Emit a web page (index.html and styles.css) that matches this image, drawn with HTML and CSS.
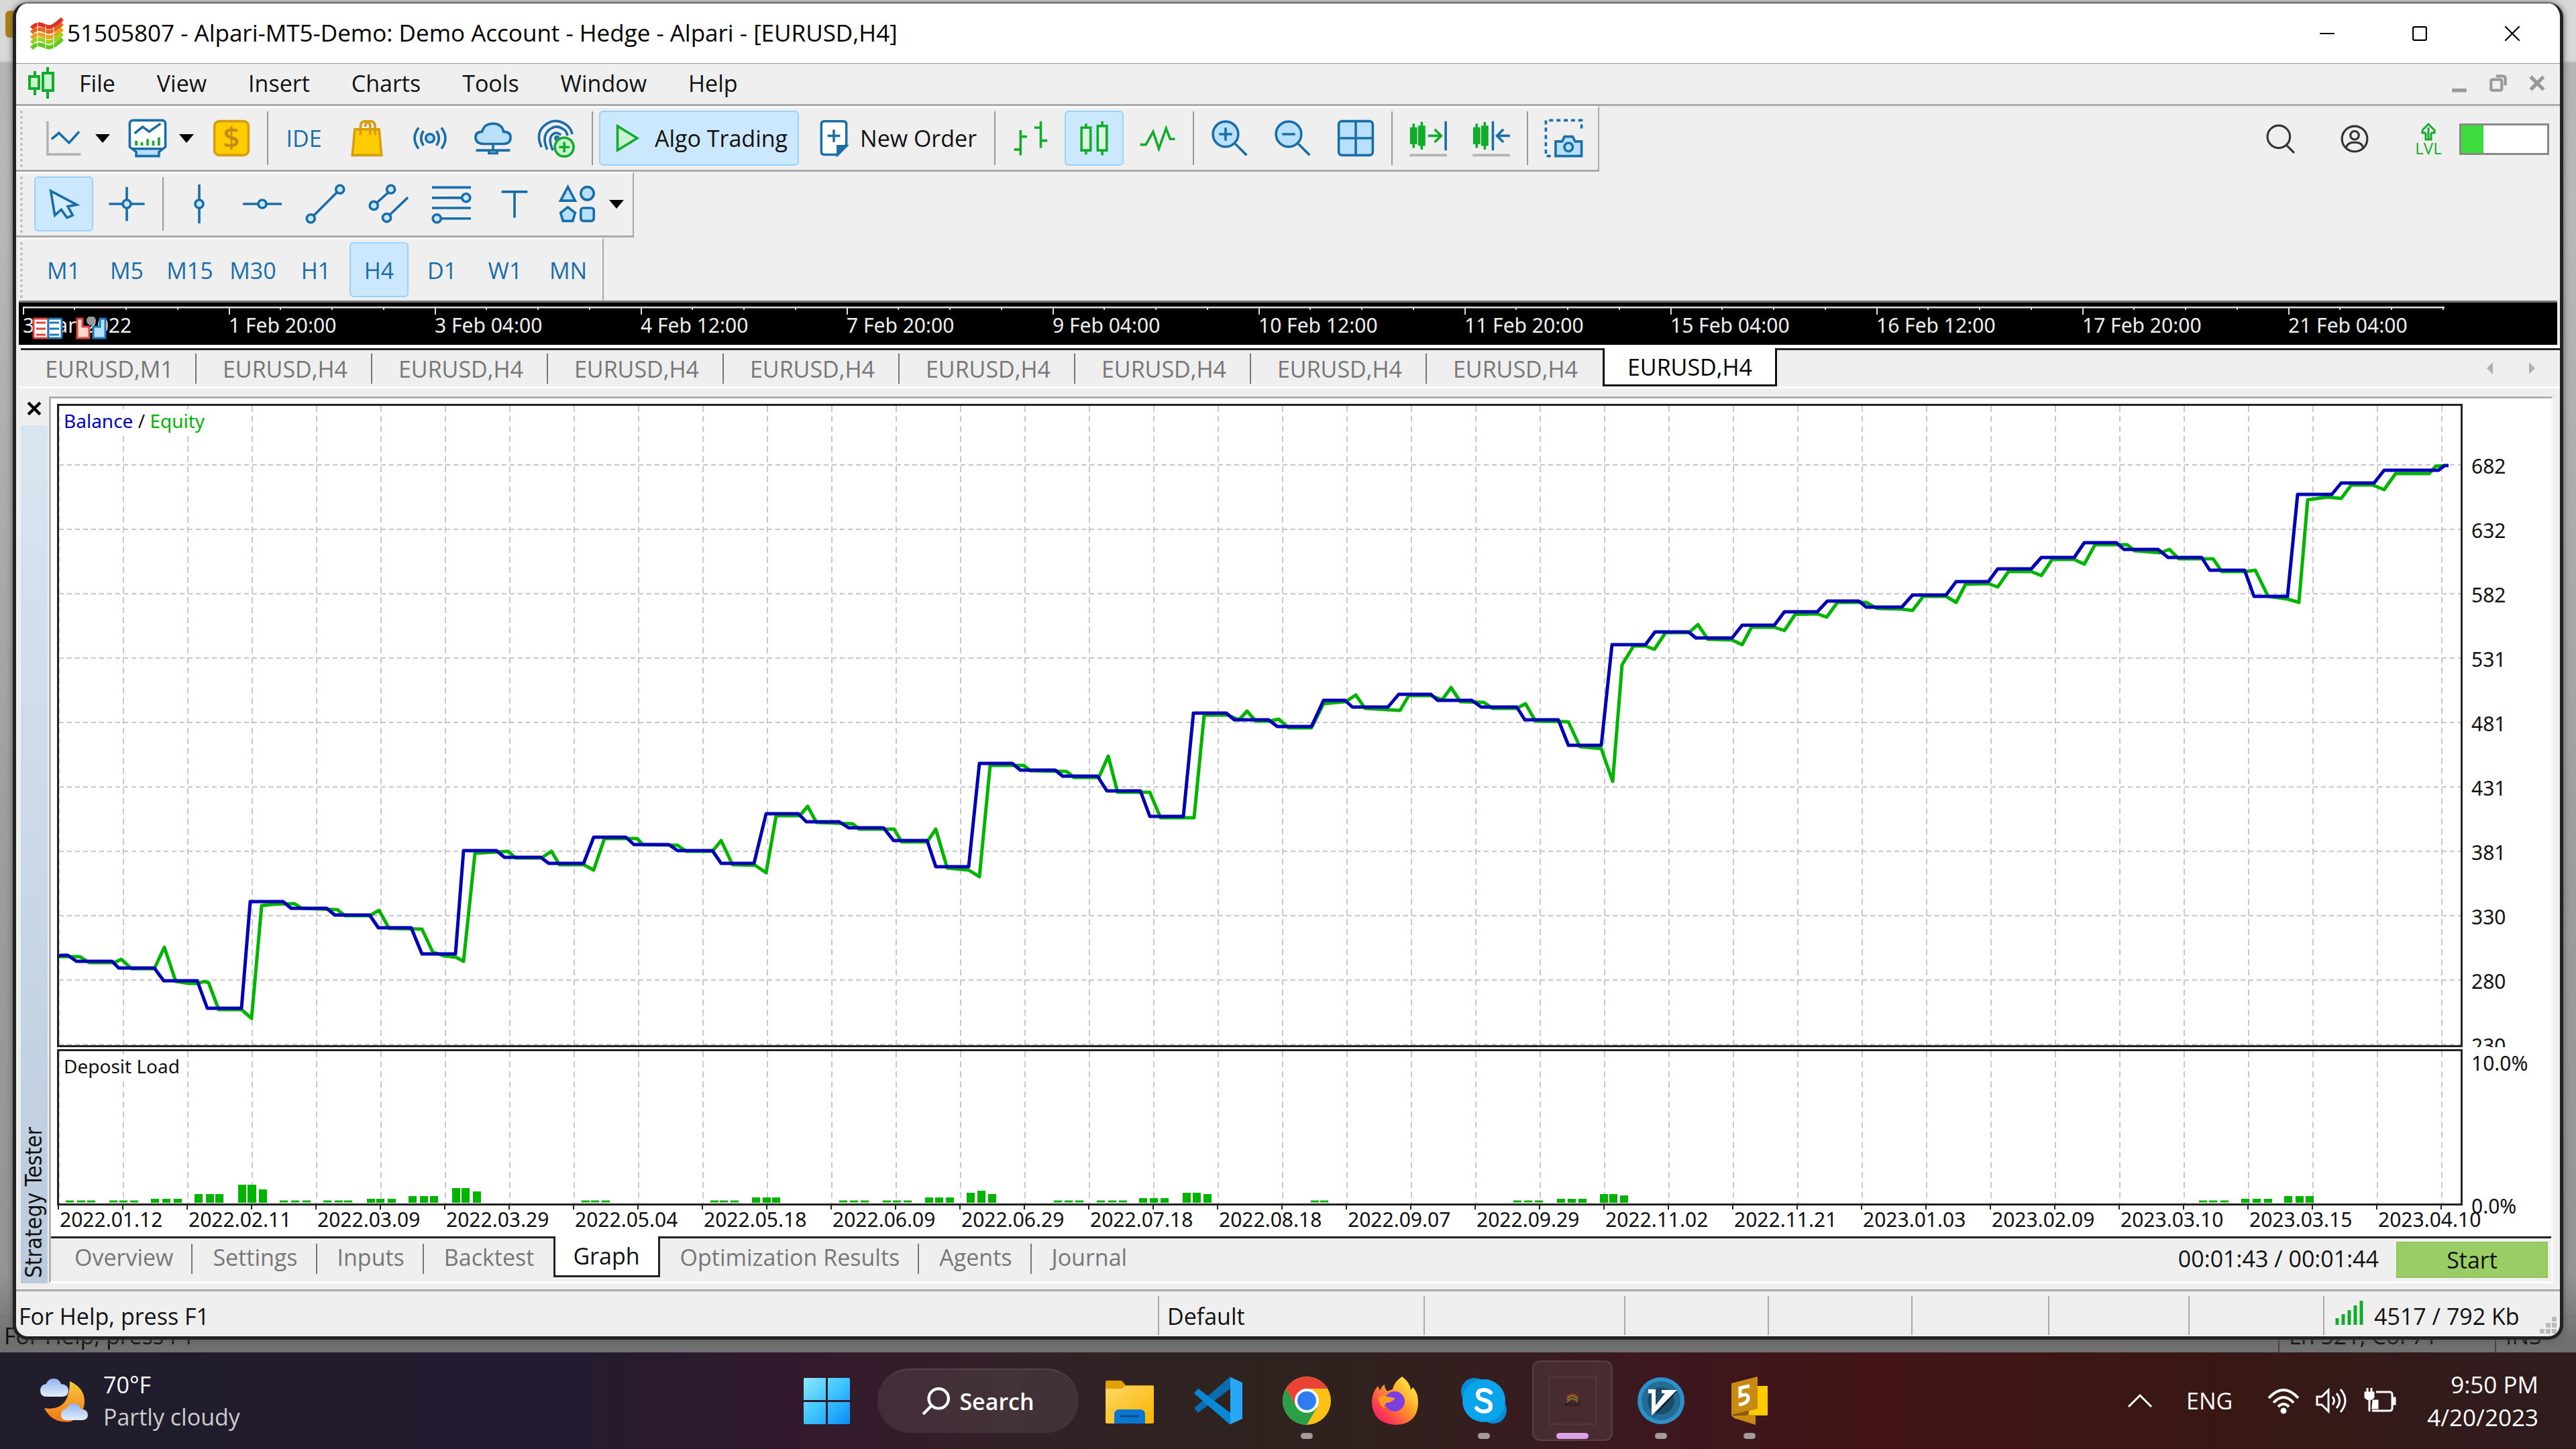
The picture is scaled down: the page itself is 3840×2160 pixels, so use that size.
FILE: index.html
```html
<!DOCTYPE html>
<html lang="en">
<head>
<meta charset="utf-8">
<title>51505807 - Alpari-MT5-Demo: Demo Account - Hedge - Alpari - [EURUSD,H4]</title>
<link rel="stylesheet" href="styles.css">
</head>
<body>
<div class="screen">
<div class="desktop">
  <div class="back-window" aria-hidden="true">
    <span class="back-logo"></span>
    <div class="back-status"><span class="back-help">For Help, press F1</span><span class="back-pos">Ln 521, Col 71</span><span class="back-ins">INS</span></div>
  </div>

  <main class="window">
    <header class="titlebar">
      <svg class="app-logo" viewBox="0 0 48 48" fill="none" stroke-width="6">
        <path d="M1 16c7-7 12-7 20-3s14 0 26-11" stroke="#e03020"/>
        <path d="M1 23c7-7 12-7 20-3s14 0 26-11" stroke="#e8641c"/>
        <path d="M1 31c7-7 12-7 20-3s14 0 26-11" stroke="#e8a020"/>
        <path d="M1 38c7-7 12-7 20-3s14 0 26-11" stroke="#9bd21c"/>
        <path d="M1 46c7-7 12-7 20-3s14 0 26-11" stroke="#5fc81c"/>
        <path d="M10 8v38M22 12v36M34 14v32" stroke="#fff" stroke-width="1"/>
      </svg>
      <h1 class="title">51505807 - Alpari-MT5-Demo: Demo Account - Hedge - Alpari - [EURUSD,H4]</h1>
      <div class="win-controls">
        <button aria-label="Minimize"><svg viewBox="0 0 20 20"><path d="M0 10h20" stroke="#000" stroke-width="2"/></svg></button>
        <button aria-label="Maximize"><svg viewBox="0 0 20 20"><rect x="1" y="1" width="18" height="18" rx="2" fill="none" stroke="#000" stroke-width="2"/></svg></button>
        <button aria-label="Close"><svg viewBox="0 0 20 20"><path d="M0 0l20 20M20 0L0 20" stroke="#000" stroke-width="2"/></svg></button>
      </div>
    </header>

    <nav class="menubar">
      <svg class="menu-logo" viewBox="0 0 42 48" stroke="#12ab2c" stroke-width="4" fill="#c8f5cf"><path d="M11 6v36M30 0v47"/><rect x="3" y="14" width="14" height="18"/><rect x="23" y="9" width="15" height="26"/></svg>
      <button>File</button><button>View</button><button>Insert</button><button>Charts</button><button>Tools</button><button>Window</button><button>Help</button>
      <div class="mdi-controls">
        <button aria-label="Minimize chart"><svg viewBox="0 0 24 28"><path d="M2 24h20" stroke="#999" stroke-width="5"/></svg></button>
        <button aria-label="Restore chart"><svg viewBox="0 0 24 28" fill="none" stroke="#999" stroke-width="4"><rect x="2" y="9" width="15" height="15" rx="2"/><path d="M9 4h9q4 0 4 4v9"/></svg></button>
        <button aria-label="Close chart"><svg viewBox="0 0 24 28"><path d="M3 5l18 18M21 5L3 23" stroke="#999" stroke-width="5"/></svg></button>
      </div>
    </nav>

    <div class="toolrow">
      <div class="toolbar">
        <button class="tool" aria-label="Chart"><svg viewBox="0 0 24 24"><path class="gray" d="M2 1.500v20.500h20.500"/><path d="M4.500 12.600L9 8.800l6.300 6.100L21.500 8"/></svg></button>
        <button class="caret" aria-label="Chart list"></button>
        <button class="tool" aria-label="Profiles"><svg viewBox="0 0 24 24"><path fill="#b9e0fa" d="M2 18h20l-3 2.500v2.500H5v-2.500z"/><rect x="1" y="1" width="22" height="17.500" rx="2" fill="#fff"/><path d="M4 9l5-4 4 3 7-5" /><path class="green" d="M5 16.500v-3M8.500 16.500v-2M12 16.500v-4M15.500 16.500v-3M19 16.500v-5"/></svg></button>
        <button class="caret" aria-label="Profile list"></button>
        <button class="tool" aria-label="Finance"><svg viewBox="0 0 24 24" class="gold"><rect x="1.500" y="1.500" width="21" height="21" rx="3" fill="#fc0"/><text x="12" y="18" text-anchor="middle" class="dollar">$</text></svg></button>
        <i class="sep"></i>
        <button class="tool ide">IDE</button>
        <button class="tool" aria-label="Market"><svg viewBox="0 0 24 24" class="gold"><path fill="#fc0" d="M4.500 6.500h15l1.500 16H3z"/><path d="M8 10V5q0-3.500 3-3.500T14 5v5M11 5q0-3.500 3-3.500T17 5v5" fill="none"/></svg></button>
        <button class="tool" aria-label="Signals"><svg viewBox="0 0 24 24"><circle cx="12" cy="12" r="2.600" fill="#b9e0fa"/><path d="M8 7.500q-3 4.500 0 9M16 7.500q3 4.500 0 9M5 5.500q-5 6.500 0 13M19 5.500q5 6.500 0 13"/></svg></button>
        <button class="tool" aria-label="Cloud"><svg viewBox="0 0 24 24"><path fill="#b9e0fa" d="M5.500 15.500q-4.300-.5-4.300-4 0-3.500 4-3.500Q6.500 3 12 3t6.500 5q4.300 0 4.300 3.500 0 4-4.300 4z"/><path d="M12 15.500v4M1.500 19.500h21M9.500 19.500h5v1.800h-5z"/></svg></button>
        <button class="tool" aria-label="Virtual hosting"><svg viewBox="0 0 24 24"><path d="M3 17.500Q-1 9 5 4t13-.5q3 2 4 6M6.500 19Q3 11 7.500 7t9-.5q2 1 2.500 4M10 19.500q-3-7-.5-9.500t5.500 0"/><circle cx="12.500" cy="12" r="1"/><circle cx="17" cy="17.500" r="5.800" fill="#c8f5cf" class="green"/><path class="green" d="M17 14.300v6.400M13.800 17.500h6.400"/></svg></button>
        <i class="sep"></i>
        <button class="tool wide on"><svg class="play" viewBox="0 0 14 24"><path d="M1 4.500v15L13.200 12z"/></svg>Algo Trading</button>
        <button class="tool wide"><svg class="order" viewBox="0 0 18 24"><path fill="#fff" d="M3 1.200h12q2 0 2 2V16l-5.500 6.500H3q-2 0-2-2v-17.300q0-2 2-2z"/><path fill="#1a6ea8" d="M11.500 22.500V17H17z"/><path d="M9 6.500v8M5 10.500h8"/></svg>New Order</button>
        <i class="sep"></i>
        <button class="tool" aria-label="Bar chart"><svg viewBox="0 0 24 24" class="green"><path d="M5.500 7v15.500M5.500 11h4M1.500 19h4M18 1.500V18M14 5.500h4M18 13.500h4"/></svg></button>
        <button class="tool on" aria-label="Candlesticks"><svg viewBox="0 0 24 24" class="green"><path d="M7 3v19M17 1.500v21"/><path fill="#d9f7df" d="M4.200 5.500h5.600v14H4.200zM14.200 4.500h5.600v15h-5.600z"/></svg></button>
        <button class="tool" aria-label="Line chart"><svg viewBox="0 0 24 24" class="green"><path d="M1.500 16h3.500L9.500 8l3.500 10.500L17.500 6l2.500 6.500h3"/></svg></button>
        <i class="sep"></i>
        <button class="tool" aria-label="Zoom in"><svg viewBox="0 0 24 24"><circle cx="9.500" cy="9.500" r="7.800" fill="#b9e0fa"/><path d="M15.500 15.500L22.500 22.500M9.500 5.500v8M5.500 9.500h8"/></svg></button>
        <button class="tool" aria-label="Zoom out"><svg viewBox="0 0 24 24"><circle cx="9.500" cy="9.500" r="7.800" fill="#b9e0fa"/><path d="M15.500 15.500L22.500 22.500M5.500 9.500h8"/></svg></button>
        <button class="tool" aria-label="Tile windows"><svg viewBox="0 0 24 24"><rect x="1.500" y="1.500" width="21" height="21" rx="2" fill="#b9e0fa"/><path d="M12 1.500v21M1.500 12h21"/></svg></button>
        <i class="sep"></i>
        <button class="tool" aria-label="Shift end"><svg viewBox="0 0 24 24"><path class="gray" d="M.5 22.500h23"/><path class="green" d="M3 3v15M8 2v17M1.500 6h3v9h-3zM6.500 5h3v11h-3zM12 10.500h7M16 6.500l4 4-4 4"/><path d="M22.800 1.500v18"/></svg></button>
        <button class="tool" aria-label="Shift chart"><svg viewBox="0 0 24 24"><path class="gray" d="M.5 22.500h23"/><path class="green" d="M3 3v15M8 2v17M1.500 6h3v9h-3zM6.500 5h3v11h-3z"/><path d="M13 1.500v18M23.500 10.500H16M19.500 6.500l-4 4 4 4"/></svg></button>
        <i class="sep"></i>
        <button class="tool" aria-label="Screenshot"><svg viewBox="0 0 24 24"><path stroke-dasharray="2.500 2" d="M4 23H1V1h22v7"/><path fill="#b9e0fa" d="M7 14h4l1.500-3h5l1.500 3h4v9H7z"/><circle cx="15" cy="17.500" r="2.600"/></svg></button>
      </div>
      <div class="quick">
        <button aria-label="Search"><svg viewBox="0 0 42 42" fill="none" stroke="#333" stroke-width="3"><circle cx="18" cy="18" r="16"/><path d="M29 30l11 11"/></svg></button>
        <button aria-label="Account"><svg viewBox="0 0 42 42" fill="none" stroke="#333" stroke-width="3"><circle cx="21" cy="21" r="18"/><circle cx="21" cy="16" r="6"/><path d="M9 34q1-8 12-8t12 8"/></svg></button>
        <button aria-label="Level" class="lvl"><svg viewBox="0 0 42 28" fill="none" stroke="#12ab2c" stroke-width="3"><path d="M21 26V8M12 12l9-9 9 9v4h-5M12 12v4h5M17 16v10h8V16"/></svg>LVL</button>
        <div class="level" role="meter" aria-valuemin="0" aria-valuemax="100" aria-valuenow="26" aria-label="Level"><i style="width:26%"></i></div>
      </div>
    </div>

    <div class="toolrow">
      <div class="toolbar">
        <button class="tool on" aria-label="Cursor"><svg viewBox="0 0 24 24"><path fill="#d4ecfc" d="M4 4l2.500 15 4-3.500 3.500 5 3.500-1.500-3-5.500 5.500-1z"/></svg></button>
        <button class="tool" aria-label="Crosshair"><svg viewBox="0 0 24 24"><path d="M12 1.500v21M1 12h22"/><circle cx="12" cy="12" r="2.500" fill="#c5e6fc"/></svg></button>
        <i class="sep"></i>
        <button class="tool" aria-label="Vertical line"><svg viewBox="0 0 24 24"><path d="M12 0v24"/><circle cx="12" cy="12" r="2.500" fill="#c5e6fc"/></svg></button>
        <button class="tool" aria-label="Horizontal line"><svg viewBox="0 0 24 24"><path d="M0 12h24"/><circle cx="12" cy="12" r="2.500" fill="#c5e6fc"/></svg></button>
        <button class="tool" aria-label="Trend line"><svg viewBox="0 0 24 24"><path d="M3 21L21 3"/><circle cx="3" cy="21" r="2.500" fill="#c5e6fc"/><circle cx="21" cy="3" r="2.500" fill="#c5e6fc"/></svg></button>
        <button class="tool" aria-label="Channel"><svg viewBox="0 0 24 24"><path d="M3 13L14 3M11 20.500L24 8"/><circle cx="3" cy="13" r="2.500" fill="#c5e6fc"/><circle cx="13.500" cy="3" r="2.500" fill="#c5e6fc"/><circle cx="11" cy="20.500" r="2.500" fill="#c5e6fc"/></svg></button>
        <button class="tool" aria-label="Fibonacci"><svg viewBox="0 0 24 24"><path d="M0 1.800h24M0 8.200h24M0 14.500h24M0 21h24"/><circle cx="21" cy="8.200" r="2.500" fill="#c5e6fc"/><circle cx="3" cy="21" r="2.500" fill="#c5e6fc"/></svg></button>
        <button class="tool" aria-label="Text"><svg viewBox="0 0 24 24"><path d="M4 4.500h16M12 4.500V20.500"/></svg></button>
        <button class="tool" aria-label="Shapes"><svg viewBox="0 0 24 24" ><g fill="#b9e0fa"><path d="M6 1.500L10.500 10h-9z"/><circle cx="18" cy="5.500" r="4"/><path d="M6 14l4.500 3.500L9 22.500H3L1.500 17.500z"/><rect x="14" y="14.500" width="8" height="8" rx="1.500"/></g></svg></button>
        <button class="caret" aria-label="Shape list"></button>
      </div>
    </div>

    <div class="toolrow last">
      <div class="toolbar periods">
        <button class="tool">M1</button><button class="tool">M5</button><button class="tool">M15</button><button class="tool">M30</button><button class="tool">H1</button><button class="tool on">H4</button><button class="tool">D1</button><button class="tool">W1</button><button class="tool">MN</button>
      </div>
    </div>

    <section class="ruler">
      <svg class="ruler-ticks" height="12"><defs><pattern id="rt" width="307" height="12" patternUnits="userSpaceOnUse"><path d="M1 0v12M77 0v5M154 0v5M231 0v5" stroke="#ddd" stroke-width="2"/></pattern></defs><rect width="3610" height="12" fill="url(#rt)"/><path d="M0 1h3610" stroke="#ddd" stroke-width="3"/></svg>
      <div class="ruler-labels"><span>31 Jan 2022</span><span>1 Feb 20:00</span><span>3 Feb 04:00</span><span>4 Feb 12:00</span><span>7 Feb 20:00</span><span>9 Feb 04:00</span><span>10 Feb 12:00</span><span>11 Feb 20:00</span><span>15 Feb 04:00</span><span>16 Feb 12:00</span><span>17 Feb 20:00</span><span>21 Feb 04:00</span></div>
      <svg class="ruler-icons" viewBox="0 0 110 36"><rect x="1" y="3" width="22" height="29" rx="2" fill="#fff" stroke="#e0453c" stroke-width="3"/><rect x="23" y="3" width="20" height="29" rx="2" fill="#fff" stroke="#1f78b8" stroke-width="3"/><path d="M5 9h14M5 18h14M5 27h14" stroke="#e0453c" stroke-width="3"/><path d="M25 9h14M25 18h14M25 27h14" stroke="#1f78b8" stroke-width="3"/><path d="M66 3h8v12h10v17H66z" fill="#ffd6d2" stroke="#e0453c" stroke-width="3"/><path d="M108 3h-8v12h-10v17h18z" fill="#b4defa" stroke="#1f78b8" stroke-width="3"/><circle cx="87" cy="6" r="7" fill="#999"/></svg>
    </section>

    <nav class="chart-tabs">
      <button>EURUSD,M1</button><button>EURUSD,H4</button><button>EURUSD,H4</button><button>EURUSD,H4</button><button>EURUSD,H4</button><button>EURUSD,H4</button><button>EURUSD,H4</button><button>EURUSD,H4</button><button>EURUSD,H4</button><button class="active">EURUSD,H4</button>
      <div class="tab-scroll"><button aria-label="Scroll left"><svg viewBox="0 0 10 18"><path d="M9 0v18L0 9z" fill="#b0b0b0"/></svg></button><button aria-label="Scroll right"><svg viewBox="0 0 10 18"><path d="M1 0v18l9-9z" fill="#b0b0b0"/></svg></button></div>
    </nav>

    <section class="tester">
      <aside class="tester-side">
        <button class="tester-close" aria-label="Close tester"><svg viewBox="0 0 20 20"><path d="M2 2l16 16M18 2L2 18" stroke="#000" stroke-width="4"/></svg></button>
        <div class="tester-name"><span>Strategy Tester</span></div>
      </aside>
      <div class="tester-body">
        <div class="graph">
          <div class="plot">
            <svg class="fill">
              <defs><pattern id="gv" x="95" width="96" height="15" patternUnits="userSpaceOnUse"><path d="M1 0v9" stroke="#c8c8c8" stroke-width="2"/></pattern><pattern id="gh" y="87" width="12" height="96" patternUnits="userSpaceOnUse"><path d="M0 1h7" stroke="#c8c8c8" stroke-width="2"/></pattern></defs>
              <rect width="100%" height="100%" fill="url(#gv)"/><rect width="100%" height="100%" fill="url(#gh)"/>
              <g fill="none" stroke-width="5" stroke-linejoin="round" transform="translate(-2 -1)">
              <polyline stroke="#00b400" points="0,822 33,822 47,831 84,831 95,826 110,840 144,840 159,808 176,859 196,862 210,862 218,859 225,861 240,901 274,901 289,914 304,746 322,744 353,743 364,750 417,752 428,761 465,761 479,753 494,780 543,781 559,815 576,821 594,823 605,829 622,668 671,665 683,675 721,675 736,665 748,685 784,685 799,693 815,646 864,646 872,655 924,656 937,665 976,665 989,649 1006,685 1040,686 1056,697 1071,612 1106,612 1118,598 1131,622 1185,624 1195,632 1247,632 1258,651 1296,651 1309,632 1326,690 1358,693 1374,703 1390,537 1440,537 1450,545 1504,546 1515,555 1552,555 1566,523 1580,577 1628,577 1644,615 1694,615 1709,462 1744,462 1761,469 1773,456 1786,471 1806,471 1820,468 1835,481 1869,481 1887,445 1920,442 1935,432 1949,452 1983,454 2001,455 2014,433 2047,433 2064,439 2077,421 2091,442 2126,443 2139,452 2175,452 2188,445 2203,471 2252,472 2269,509 2301,512 2318,561 2332,387 2349,359 2367,359 2380,364 2397,339 2432,339 2445,327 2460,349 2496,350 2511,357 2525,331 2559,331 2574,336 2590,312 2623,311 2637,316 2653,294 2696,294 2712,303 2749,304 2765,306 2781,285 2815,285 2830,294 2844,267 2878,266 2892,271 2908,248 2942,248 2957,254 2973,230 3006,230 3021,237 3037,208 3085,208 3096,217 3134,220 3148,215 3162,229 3213,229 3226,248 3262,248 3276,246 3295,285 3324,289 3341,294 3354,141 3384,137 3404,139 3419,119 3451,119 3468,126 3485,102 3535,102 3545,91 3558,90"/>
              <polyline stroke="#0000b4" points="0,822 5,820 15,820 28,829 81,829 91,839 144,839 158,858 208,858 223,899 274,899 287,740 336,740 348,750 401,750 413,760 465,760 478,779 527,779 543,818 593,818 605,664 654,664 666,674 720,674 732,683 784,683 799,644 847,644 859,655 911,655 924,664 976,664 989,683 1038,683 1056,609 1104,609 1116,621 1165,621 1179,630 1231,630 1246,649 1296,649 1309,688 1358,688 1374,534 1423,534 1435,544 1487,544 1498,553 1550,553 1564,575 1614,575 1628,613 1678,613 1693,459 1742,459 1754,469 1805,469 1818,479 1869,479 1887,440 1919,440 1930,450 1983,450 1999,431 2047,431 2057,440 2108,440 2122,450 2175,450 2187,469 2237,469 2252,507 2301,507 2317,357 2367,357 2381,338 2431,338 2442,347 2496,347 2511,328 2559,328 2574,308 2623,308 2638,292 2685,292 2696,301 2749,301 2765,283 2815,283 2830,263 2878,263 2892,244 2942,244 2957,227 3006,227 3021,205 3069,205 3080,215 3131,215 3146,227 3196,227 3208,246 3260,246 3274,285 3324,285 3339,133 3390,133 3404,116 3453,116 3468,97 3549,97 3558,90 3564,90"/>
              </g>
            </svg>
            <p class="legend"><span class="bal">Balance</span> / <span class="eq">Equity</span></p>
          </div>
          <div class="y-axis"><span>682</span><span>632</span><span>582</span><span>531</span><span>481</span><span>431</span><span>381</span><span>330</span><span>280</span><span>230</span></div>
          <div class="load">
            <svg class="fill">
              <rect width="100%" height="100%" fill="url(#gv)"/>
              <g transform="translate(-2 -1)">
              <path fill="none" stroke="#00b400" stroke-width="3" d="M12 225h12M29 225h12M44 225h12M77 225h12M92 225h12M108 225h12M331 225h12M348 225h12M365 225h12M396 225h12M413 225h12M427 225h12M781 225h12M795 225h12M811 225h12M973 225h12M987 225h12M1003 225h12M1165 225h12M1181 225h12M1197 225h12M1230 225h12M1245 225h12M1261 225h12M1485 225h12M1501 225h12M1517 225h12M1549 225h12M1566 225h12M1582 225h12M1868 225h12M1882 225h12M2170 225h12M2186 225h12M2202 225h12M3192 225h12M3207 225h12M3224 225h12"/>
              <path fill="#00b400" d="M139 221h12v6h-12zM156 221h12v6h-12zM173 221h12v6h-12zM204 214h12v13h-12zM221 214h12v13h-12zM235 214h12v13h-12zM269 200h12v27h-12zM283 200h13v27h-13zM300 207h12v20h-12zM461 221h12v6h-12zM475 221h12v6h-12zM492 221h12v6h-12zM523 217h12v10h-12zM540 217h12v10h-12zM555 217h12v10h-12zM588 205h12v22h-12zM602 205h12v22h-12zM619 210h12v17h-12zM1035 219h12v8h-12zM1051 219h12v8h-12zM1065 219h12v8h-12zM1293 219h12v8h-12zM1308 219h12v8h-12zM1324 219h12v8h-12zM1355 212h12v15h-12zM1371 209h12v18h-12zM1387 214h12v13h-12zM1612 220h12v7h-12zM1628 220h12v7h-12zM1644 220h12v7h-12zM1677 212h12v15h-12zM1692 212h12v15h-12zM1708 214h12v13h-12zM2235 221h12v6h-12zM2251 221h12v6h-12zM2267 221h12v6h-12zM2299 214h12v13h-12zM2313 214h12v13h-12zM2329 216h12v11h-12zM3255 221h12v6h-12zM3272 221h12v6h-12zM3289 221h12v6h-12zM3319 217h12v10h-12zM3336 217h12v10h-12zM3351 217h12v10h-12z"/>
              </g>
            </svg>
            <p class="legend">Deposit Load</p>
          </div>
          <div class="load-axis"><span>10.0%</span><span>0.0%</span></div>
          <div class="dates"><span>2022.01.12</span><span>2022.02.11</span><span>2022.03.09</span><span>2022.03.29</span><span>2022.05.04</span><span>2022.05.18</span><span>2022.06.09</span><span>2022.06.29</span><span>2022.07.18</span><span>2022.08.18</span><span>2022.09.07</span><span>2022.09.29</span><span>2022.11.02</span><span>2022.11.21</span><span>2023.01.03</span><span>2023.02.09</span><span>2023.03.10</span><span>2023.03.15</span><span>2023.04.10</span></div>
        </div>
        <nav class="tester-tabs">
          <button>Overview</button><button>Settings</button><button>Inputs</button><button class="before">Backtest</button><button class="active">Graph</button><button>Optimization Results</button><button>Agents</button><button class="before">Journal</button>
          <span class="timer">00:01:43 / 00:01:44</span>
          <button class="start">Start</button>
        </nav>
      </div>
    </section>

    <footer class="status">
      <span class="help">For Help, press F1</span><span class="c396">Default</span><span class="c299"></span><span class="c214"></span><span class="c214"></span><span class="c204"></span><span class="c209"></span><span class="c201"></span>
      <span class="net"><svg viewBox="0 0 42 36"><path d="M3 36V26M12 36V20M21 36V14M30 36V7M39 36V0" stroke="#12ab2c" stroke-width="5"/></svg>4517 / 792 Kb</span>
      <svg class="grip" viewBox="0 0 26 26" fill="#bbb"><path d="M18 0h7v7h-7zM9 9h7v7H9zM18 9h7v7h-7zM0 18h7v7H0zM9 18h7v7H9zM18 18h7v7h-7z"/></svg>
    </footer>
  </main>
</div>

<footer class="taskbar">
  <button class="weather">
    <svg viewBox="0 0 72 66"><defs><linearGradient id="mo" x2="0" y2="1"><stop stop-color="#f8c83c"/><stop offset="1" stop-color="#f07818"/></linearGradient><linearGradient id="cl" x2="0" y2="1"><stop stop-color="#8fb4f0"/><stop offset="1" stop-color="#e4eefc"/></linearGradient></defs><path d="M44 4q22 10 22 30T46 64Q18 68 6 44q38 6 38-40z" fill="url(#mo)"/><path d="M10 27q-10 0-10-9t9-10q3-8 11-8t11 8q11 1 11 10t-10 9z" fill="url(#cl)"/><path d="M40 62q-9 0-9-8t8-9q3-8 11-8t10 8q11 1 11 9t-9 8z" fill="url(#cl)"/></svg>
    <span><b>70°F</b><em>Partly cloudy</em></span>
  </button>
  <div class="apps">
    <button class="app" aria-label="Start"><svg viewBox="0 0 72 72"><defs><linearGradient id="wi" x2="1" y2="1"><stop stop-color="#8ee6ff"/><stop offset=".5" stop-color="#3cc4ff"/><stop offset="1" stop-color="#0a8cf8"/></linearGradient></defs><path fill="url(#wi)" d="M4 2h31v33H2V4q0-2 2-2zM38 2h31q2 0 2 2v31H38zM2 38h33v33H4q-2 0-2-2zM38 38h33v31q0 2-2 2H38z"/></svg></button>
    <button class="search"><svg viewBox="0 0 40 40" fill="none" stroke="#fff" stroke-width="4"><circle cx="24" cy="16" r="14"/><path d="M14 26L2 38"/></svg>Search</button>
    <button class="app" aria-label="File Explorer"><svg viewBox="0 0 72 72"><defs><linearGradient id="fo" x2="1" y2="1"><stop stop-color="#ffd766"/><stop offset="1" stop-color="#f8b400"/></linearGradient></defs><path fill="#e0a000" d="M0 8q0-2 2-2h22l6 7h40q2 0 2 2v20H0z"/><path fill="url(#fo)" d="M0 18h24l5-4h41q2 0 2 2v52q0 2-2 2H2q-2 0-2-2z"/><path fill="#0a78d0" d="M13 70V57q0-8 8-8h30q8 0 8 8v13z"/><path d="M22 59h28" stroke="#0a4a90" stroke-width="3"/></svg></button>
    <button class="app" aria-label="VS Code"><svg viewBox="0 0 72 72"><path fill="#0a6cb0" d="M0 47l6 7L54 18V0z"/><path fill="#0a88d8" d="M0 25l6-7L54 54v18z"/><path fill="#28a8f4" d="M52 0l20 9v54L52 72l2-1V1z"/></svg></button>
    <button class="app run" aria-label="Chrome"><svg viewBox="0 0 72 72"><circle cx="36" cy="36" r="36" fill="#fbc116"/><path fill="#ea4335" d="M5 18a36 36 0 0 1 62 0H36L20 44z"/><path fill="#2b9e48" d="M5 18a36 36 0 0 0 31 54l16-27-32-1z"/><circle cx="36" cy="36" r="18" fill="#fff"/><circle cx="36" cy="36" r="14" fill="#2f7cf0"/></svg></button>
    <button class="app" aria-label="Firefox"><svg viewBox="0 0 72 72"><defs><linearGradient id="ff" x1="1" x2="0" y2="1"><stop offset=".1" stop-color="#fff04a"/><stop offset=".45" stop-color="#ff9a28"/><stop offset=".75" stop-color="#ff3c50"/><stop offset="1" stop-color="#e0108a"/></linearGradient></defs><path fill="url(#ff)" d="M46 0q12 9 13 20l3-4q8 8 8 22 0 33-34 34Q2 70 1 38 1 24 10 14l3 7q3-8 7-9 0 6 4 10l8-3Q34 8 46 0z"/><circle cx="35" cy="37" r="15" fill="#7b3fe0"/><path fill="#ff9a28" d="M10 32q6-6 14-2l12 2q-4 6-12 7-6 2-4 9-8-5-10-16z"/></svg></button>
    <button class="app run" aria-label="Skype"><svg viewBox="0 0 72 72"><circle cx="22" cy="22" r="20" fill="#0a8ad8"/><circle cx="50" cy="50" r="20" fill="#0a8ad8"/><circle cx="36" cy="36" r="32" fill="#0aa4ec"/><path d="M46 24q-4-4-10-4-9 0-9 7 0 6 9 8 10 2 10 9 0 8-10 8-7 0-11-5" fill="none" stroke="#fff" stroke-width="6" stroke-linecap="round"/></svg></button>
    <button class="app run current" aria-label="Alpari"><svg viewBox="0 0 72 72"><rect x="1" y="1" width="70" height="70" fill="none" stroke="#5c4448" stroke-width="1"/><path d="M28 34q8-10 16 0M28 38q8-10 16 0" fill="none" stroke="#8a7a20" stroke-width="2"/><path d="M28 31q8-9 16 0" fill="none" stroke="#a04028" stroke-width="2"/><text x="36" y="44" text-anchor="middle" class="alpari">alpari</text></svg></button>
    <button class="app run" aria-label="Vim"><svg viewBox="0 0 72 72"><circle cx="36" cy="36" r="35" fill="#2e90c8"/><circle cx="36" cy="36" r="29" fill="#246c94"/><circle cx="36" cy="36" r="20" fill="#1a4c6c"/><path fill="#0a1a28" d="M24 62l36-40-6 0z"/><path fill="#fff" d="M17 19h11v24l14-18h-5v-5h23L22 58V25h-5z"/></svg></button>
    <button class="app run" aria-label="Sublime Text"><svg viewBox="0 0 72 72"><path fill="#fc0" d="M40 14h23v44H34z"/><path fill="#c88a10" d="M9 10L48 0v48L9 58zM9 58l36-1v15L13 62z"/><path fill="#8a5c08" d="M9 57l25-6v7z"/><path d="M36 14l-14 3v12q12-5 12 3t-14 10" fill="none" stroke="#fff" stroke-width="5"/></svg></button>
  </div>
  <div class="tray">
    <button aria-label="Hidden icons"><svg class="chev" viewBox="0 0 38 22"><path d="M2 20L19 3l17 17" fill="none" stroke="#fff" stroke-width="3"/></svg></button>
    <button class="lang">ENG</button>
    <button class="sys" aria-label="System status">
      <svg viewBox="0 0 48 40" fill="none" stroke="#fff" stroke-width="4"><path d="M2 16q22-24 44 0M9 23q15-16 30 0M16 29q8-8 16 0"/><circle cx="24" cy="35" r="2.500" fill="#fff"/></svg>
      <svg viewBox="0 0 48 40" fill="none" stroke="#fff" stroke-width="3"><path d="M2 14h7L19 4v32L9 26H2zM25 14q5 6 0 12M31 9q9 11 0 22M37 3q14 17 0 34"/></svg>
      <svg viewBox="0 0 48 40" fill="none" stroke="#fff" stroke-width="3"><path d="M18 7h20q4 0 4 4v20q0 4-4 4H12M8 14v22"/><path fill="#fff" d="M2 8h12v7q-6 6-12 0zM5 1v7M11 1v7M14 20h6v11h-7zM43 16h3v9h-3z"/></svg>
    </button>
    <button class="clock"><span>9:50 PM</span><span>4/20/2023</span></button>
  </div>
</footer>
</div>
</body>
</html>
```
FILE: styles.css
```css
* { box-sizing: border-box; }
body { margin: 0; font-family: "Open Sans", sans-serif; font-size: 34px; line-height: 46px; color: #111; }
button { margin: 0; padding: 0; border: 0; background: none; font: inherit; color: inherit; white-space: nowrap; }
h1, p { margin: 0; font-weight: 400; font-size: inherit; }
.screen { display: grid; grid-template-rows: minmax(0, 1fr) 144px; height: 100vh; overflow: hidden; }

/* Desktop and the window behind */
.desktop { position: relative; display: flex; padding: 4px 19px 19px; background: #777; }
.back-window { position: absolute; inset: 0; overflow: hidden; background: linear-gradient(#d8d8d8 0 90px, #b4b4b4 94px, #b8b8b8 300px, #9c9c9c 1300px, #949494 1900px, #707070 1998px); }
.back-logo { position: absolute; left: 8px; top: 16px; width: 30px; height: 40px; background: #b08010; border-radius: 6px; }
.back-status { position: absolute; left: 0; right: 0; bottom: 0; height: 54px; padding-left: 6px; display: flex; border-top: 2px solid #777; }
.back-help, .back-pos, .back-ins { padding-top: 4px; }
.back-help { flex: 1; }
.back-pos { width: 323px; padding-left: 14px; border-left: 2px solid #444; }
.back-ins { width: 121px; padding-left: 14px; border-left: 2px solid #444; }

/* Main window */
.window { position: relative; flex: 1; min-width: 0; display: flex; flex-direction: column; background: #efefef; border: 5px solid #222; border-top-width: 1px; border-radius: 22px; overflow: hidden; box-shadow: 0 0 10px #555; }
.titlebar { flex: none; display: flex; align-items: center; height: 90px; padding-left: 21px; background: #fff; border-bottom: 1px solid #999; }
.app-logo { width: 50px; height: 48px; margin-right: 5px; }
.title { flex: 1; color: #000; font-size: 35px; padding-bottom: 2px; }
.win-controls { display: flex; padding: 0 2px 4px 0; }
.win-controls button { width: 138px; height: 80px; }
.win-controls svg { width: 22px; height: 22px; }

.menubar { flex: none; display: flex; align-items: center; height: 63px; padding: 0 0 2px 17px; border-bottom: 3px solid #aaa; }
.menu-logo { width: 42px; height: 48px; margin-right: 4px; }
.menubar > button { padding: 0 31px; }
.mdi-controls { margin-left: auto; padding-right: 5px; display: flex; }
.mdi-controls button { width: 58px; }
.mdi-controls svg { width: 26px; height: 30px; display: block; margin: auto; }

/* Toolbars */
.toolrow { flex: none; display: flex; height: 98px; }
.toolbar { display: flex; align-items: center; padding: 0 4px 2px 24px; border-right: 2px solid #aaa; border-bottom: 3px solid #aaa; border-top: 3px solid #fafafa; position: relative; }
.toolbar::before { content: ""; position: absolute; left: 6px; top: 4px; bottom: 4px; border-left: 4px dotted #bbb; }
.toolrow.last .toolbar { border-bottom: 0; }
.toolrow.last { height: 94px; }
.tool { width: 88px; height: 82px; margin: 0 3px; display: flex; align-items: center; justify-content: center; border: 2px solid transparent; border-radius: 6px; }
.tool.on { background: #cce8ff; border-color: #99d1ff; }
.tool svg { width: 58px; height: 58px; fill: none; stroke: #1a6ea8; stroke-width: 1.5; overflow: visible; }
.tool svg.gold { stroke: #d89c10; }
.tool svg.green, .tool svg .green { stroke: #12ab2c; }
.tool svg .gray { stroke: #b4b4b4; }
.tool.wide { width: auto; padding: 0 15px 0 23px; }
.tool svg.play { width: 34px; height: 58px; margin-right: 24px; fill: #c8f5cf; stroke: #12ab2c; }
.tool svg.order { width: 42px; height: 56px; margin-right: 18px; }
.dollar { font: 600 18px "Open Sans", sans-serif; fill: #c88a10; stroke: none; }
.ide, .periods .tool { color: #1a6ea8; }
.periods .tool { padding-top: 3px; }
.caret { width: 31px; height: 82px; }
.caret::before { content: ""; display: block; border: 11px solid transparent; border-top: 13px solid #000; border-bottom: 0; width: 0; }
.sep { width: 2px; height: 80px; margin: 0 6px; background: #999; }

.quick { flex: 1; display: flex; align-items: center; justify-content: flex-end; padding: 0 16px 0 0; gap: 26px; }
.quick button { width: 84px; }
.quick button svg { width: 44px; height: 44px; display: block; margin: auto; }
.quick .lvl { color: #12ab2c; font-size: 24px; line-height: 22px; }
.quick .lvl svg { height: 28px; }
.level { width: 134px; height: 47px; border: 3px solid #888; background: #fff; margin-left: -22px; }
.level i { display: block; height: 100%; background: #3ddc3d; }

/* Time ruler */
.ruler { flex: none; position: relative; height: 66px; margin: 0 4px; padding: 6px 0 0 6px; background: #000; border-top: 3px solid #777; overflow: hidden; }
.ruler-ticks { display: block; width: 100%; }
.ruler-labels { display: grid; grid-template-columns: repeat(12, 307px); font-family: "Noto Sans", sans-serif; font-size: 30px; line-height: 32px; color: #eee; }
.ruler-icons { position: absolute; left: 20px; top: 21px; width: 112px; height: 36px; }

/* Chart tabs */
.chart-tabs { flex: none; display: flex; height: 65px; margin: 0 0 0 7px; border-top: 5px solid #fff; border-bottom: 3px solid #fff; color: #777; position: relative; }
.chart-tabs > button { width: 262px; border-top: 3px solid #222; display: flex; align-items: center; justify-content: center; position: relative; padding: 2px 0 0 2px; }
.chart-tabs > button::after { content: ""; position: absolute; right: 0; top: 5px; height: 45px; border-right: 2px solid #777; }
.chart-tabs > button.active { width: 260px; color: #000; background: #fff; border: 3px solid #111; border-top: 0; padding: 2px 0 0; }
.chart-tabs > button:nth-last-child(3)::after, .chart-tabs > button.active::after { display: none; }
.tab-scroll { flex: 1; display: flex; align-items: center; justify-content: flex-end; gap: 52px; padding-right: 37px; border-top: 3px solid #222; }
.tab-scroll svg { width: 10px; height: 18px; display: block; }

/* Strategy tester */
.tester { flex: 1; min-height: 0; display: flex; margin: 12px 10px 9px 7px; }
.tester-side { width: 40px; display: flex; flex-direction: column; }
.tester-close { height: 43px; padding-bottom: 8px; }
.tester-close svg { width: 22px; height: 22px; display: block; margin: auto; }
.tester-name { flex: 1; display: flex; justify-content: flex-start; writing-mode: vertical-rl; transform: rotate(180deg); background: linear-gradient(#bccbdc, #d8e6f2); font-size: 33px; line-height: 40px; padding-top: 8px; font-family: "DejaVu Sans Condensed", "DejaVu Sans", sans-serif; }
.tester-body { flex: 1; min-width: 0; margin-left: 2px; display: flex; flex-direction: column; border: 3px solid #b0b0b0; border-right-color: #f8f8f8; border-bottom: 3px solid #fff; }
.graph { flex: 1; min-height: 0; display: grid; grid-template: minmax(0, 1fr) 233px 43px / minmax(0, 1fr) 132px; row-gap: 3px; padding: 8px 0 0 9px; background: #fff; font-family: "Noto Sans", sans-serif; font-size: 30px; line-height: 34px; border-bottom: 3px solid #222; }
.plot, .load { position: relative; border: 3px solid #222; }
.fill { position: absolute; inset: 0; width: 100%; height: 100%; }
.legend { position: relative; width: max-content; margin: 5px 0 0 7px; background: #fff; font-size: 28px; }
.bal { color: #0000c0; }
.eq { color: #00b400; }
.y-axis { padding: 45px 0 0 13px; overflow: hidden; display: flex; flex-direction: column; }
.y-axis span { flex: none; height: 96px; line-height: 96px; }
.load-axis { padding: 4px 0 0 13px; display: flex; flex-direction: column; justify-content: space-between; overflow: visible; }
.load-axis span:last-child { margin-bottom: -18px; }
.dates { grid-column: 1 / -1; display: grid; grid-template-columns: repeat(19, 192px); position: relative; padding: 4px 0 0 4px; margin-top: -3px; background: repeating-linear-gradient(90deg, #222 0 2px, transparent 2px 96px) 1px 0 / 3554px 6px no-repeat; }

.tester-tabs { flex: none; display: flex; height: 64px; padding: 0 5px; color: #777; line-height: 40px; }
.tester-tabs button { padding: 0 29px 0 30px; height: 55px; position: relative; }
.tester-tabs button::after { content: ""; position: absolute; right: 0; top: 8px; height: 45px; border-right: 2px solid #777; }
.tester-tabs .before::after, .tester-tabs .active::after, .tester-tabs .start::after { display: none; }
.tester-tabs .active { background: #fff; color: #111; border: 3px solid #222; border-top: 0; padding: 0 27px 0 26px; margin-top: -3px; height: 61px; }
.timer { margin-left: auto; color: #111; padding: 10px 26px 0 0; }
.tester-tabs .start { width: 226px; height: 54px; padding: 0; margin-top: 5px; background: #9acd66; color: #111; border: 2px solid #8fc45a; }

/* Status bar */
.status { flex: none; display: flex; align-items: center; height: 70px; border-top: 3px solid #aaa; position: relative; padding-top: 4px; }
.status span { height: 58px; line-height: 60px; border-left: 2px solid #aaa; }
.status .help { flex: 1; border: 0; padding-left: 4px; }
.c396 { width: 396px; padding-left: 12px; }
.c299 { width: 299px; }
.c214 { width: 214px; }
.c204 { width: 204px; }
.c209 { width: 209px; }
.c201 { width: 201px; }
.status .net { width: 353px; padding-left: 16px; }
.net svg { width: 42px; height: 36px; margin-right: 16px; }
.grip { position: absolute; right: 4px; bottom: 3px; width: 26px; height: 26px; }

/* Taskbar */
.taskbar { position: relative; display: grid; grid-template-columns: 1fr auto 1fr; align-items: center; color: #fff; background: linear-gradient(90deg, #201d2c, #241b30 22%, #33192c 32%, #332028 38%, #2e2320 48%, #32201f 55%, #3c171f 64%, #421416 73%, #3a1712 84%, #2e1c1f); }
.weather { display: flex; align-items: center; gap: 22px; padding-left: 60px; text-align: left; line-height: 48px; }
.weather svg { width: 72px; height: 66px; }
.weather b, .weather em { display: block; font: inherit; }
.weather em { color: #ccc; }
.apps { display: flex; gap: 12px; align-items: center; }
.app { position: relative; width: 120px; height: 120px; border-radius: 12px; }
.app svg { display: block; width: 72px; height: 72px; margin: auto; }
.app.run::after { content: ""; position: absolute; left: 51px; bottom: 3px; width: 18px; height: 9px; border-radius: 5px; background: #a59a9c; }
.app.current { background: #ffffff14; border: 2px solid #ffffff18; }
.app.current::after { left: 34px; bottom: 1px; width: 48px; background: #dd9fe5; }
.alpari { font: 9px "Open Sans", sans-serif; fill: #111; }
.search { display: flex; align-items: center; justify-content: center; gap: 14px; width: 300px; height: 96px; margin: 0 4px; border-radius: 48px; background: #ffffff14; border-top: 2px solid #ffffff18; font-weight: 600; }
.search svg { width: 42px; height: 42px; }
.tray { display: flex; align-items: center; justify-content: flex-end; padding-right: 56px; }
.chev { display: block; width: 38px; height: 22px; }
.lang { padding: 0 52px 0 50px; }
.sys { display: flex; gap: 24px; }
.sys svg { width: 48px; height: 40px; }
.clock { text-align: right; padding-left: 46px; font-size: 35px; line-height: 49px; }
.clock span { display: block; }
```
